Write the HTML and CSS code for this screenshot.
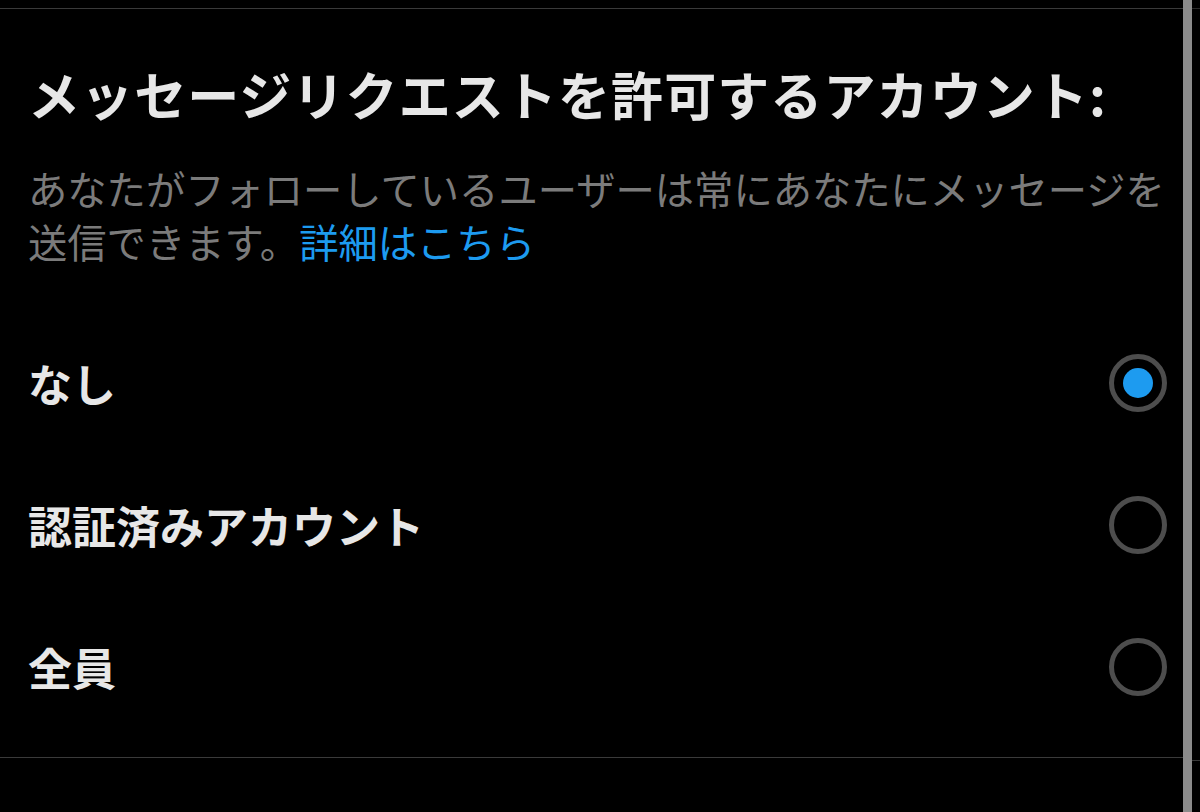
FILE: index.html
```html
<!DOCTYPE html>
<html lang="ja">
<head>
<meta charset="utf-8">
<title>メッセージリクエスト</title>
<link rel="stylesheet" href="styles.css">
</head>
<body>
<div class="page">
  <main class="panel">
    <h1 class="title">メッセージリクエストを許可するアカウント:</h1>
    <p class="desc">あなたがフォローしているユーザーは常にあなたにメッセージを<br>送信できます。<a class="link" href="#">詳細はこちら</a></p>
    <ul class="options">
      <li class="option">
        <span class="label">なし</span>
        <span class="radio checked"><span class="dot"></span></span>
      </li>
      <li class="option">
        <span class="label">認証済みアカウント</span>
        <span class="radio"></span>
      </li>
      <li class="option">
        <span class="label">全員</span>
        <span class="radio"></span>
      </li>
    </ul>
  </main>
  <div class="scrollbar"></div>
  <div class="edge"></div>
</div>
</body>
</html>
```
FILE: styles.css
```css
html, body {
  margin: 0;
  padding: 0;
  background: #000;
}
body {
  font-family: "Noto Sans CJK JP", "Noto Sans", sans-serif;
  color: #e7e7e7;
  width: 1200px;
  height: 812px;
  overflow: hidden;
}
.page {
  display: flex;
  height: 812px;
}
.panel {
  width: 1183px;
  flex: none;
  margin-top: 8px;
  border-top: 1px solid #3a3a3a;
  align-self: flex-start;
  padding: 0 16px 19px 28px;
  box-sizing: border-box;
  border-bottom: 1px solid #3a3a3a;
}
.scrollbar {
  width: 9px;
  flex: none;
  background: #8b8b8b;
}
.edge {
  flex: 1;
  margin-top: 8px;
  height: 751px;
  border-top: 1px solid #2a2a2a;
  border-bottom: 1px solid #3a3a3a;
}
.title {
  margin: 55px 0 0;
  font-size: 52px;
  line-height: 60px;
  font-weight: 700;
  letter-spacing: 1.1px;
  color: #e7e7e7;
  white-space: nowrap;
}
.desc {
  margin: 37px 0 0;
  font-size: 39.3px;
  line-height: 53px;
  color: #7b7b7b;
  white-space: nowrap;
}
.link {
  color: #1d9bf0;
  text-decoration: none;
}
.options {
  list-style: none;
  margin: 45px 0 0;
  padding: 0;
}
.option {
  height: 142px;
  display: flex;
  align-items: center;
  justify-content: space-between;
}
.label {
  font-size: 44px;
  font-weight: 700;
  color: #e7e7e7;
}
.radio {
  width: 58px;
  height: 58px;
  box-sizing: border-box;
  border: 5px solid #4d4d4d;
  border-radius: 50%;
  display: flex;
  align-items: center;
  justify-content: center;
}
.dot {
  width: 30px;
  height: 30px;
  border-radius: 50%;
  background: #1d9bf0;
}
```
